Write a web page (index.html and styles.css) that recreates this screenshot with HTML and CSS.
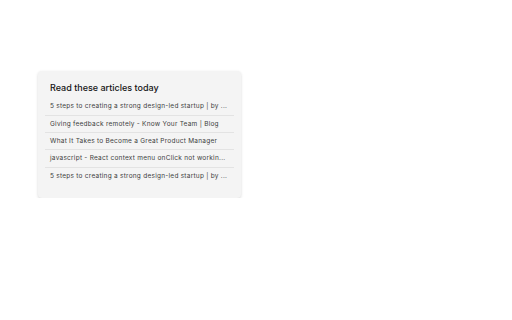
FILE: index.html
```html
<!DOCTYPE html>
<html>
<head>
<meta charset="utf-8">
<link rel="stylesheet" href="styles.css">
</head>
<body>
<div class="page">
  <div class="card">
    <div class="title">Read these articles today</div>
    <ul class="list">
      <li class="item">5 steps to creating a strong design-led startup | by ...</li>
      <li class="item">Giving feedback remotely - Know Your Team | Blog</li>
      <li class="item">What It Takes to Become a Great Product Manager</li>
      <li class="item">javascript - React context menu onClick not workin...</li>
      <li class="item">5 steps to creating a strong design-led startup | by ...</li>
    </ul>
  </div>
</div>
</body>
</html>
```
FILE: styles.css
```css
html, body {
  margin: 0;
  padding: 0;
  background: #ffffff;
  font-family: Inter, "Noto Sans", sans-serif;
}
.page {
  padding: 71px 0 0 38px;
}
.card {
  width: 203px;
  box-sizing: border-box;
  padding: 10px 7px 14px;
  background: #f4f4f4;
  border-radius: 4px;
  box-shadow: 0 1px 3px rgba(0, 0, 0, 0.16);
}
.title {
  font-size: 9px;
  font-weight: 500;
  line-height: 14px;
  color: #141414;
  padding: 0 5px;
  margin-bottom: 2.5px;
}
.list {
  list-style: none;
  margin: 0;
  padding: 0;
}
.item {
  height: 17.3px;
  line-height: 17.3px;
  font-size: 6.5px;
  letter-spacing: 0.25px;
  color: #404040;
  padding: 0 5px;
  white-space: nowrap;
  overflow: hidden;
}
.item + .item {
  border-top: 1px solid #e3e3e3;
  height: 16.3px;
  line-height: 16.3px;
}
```
